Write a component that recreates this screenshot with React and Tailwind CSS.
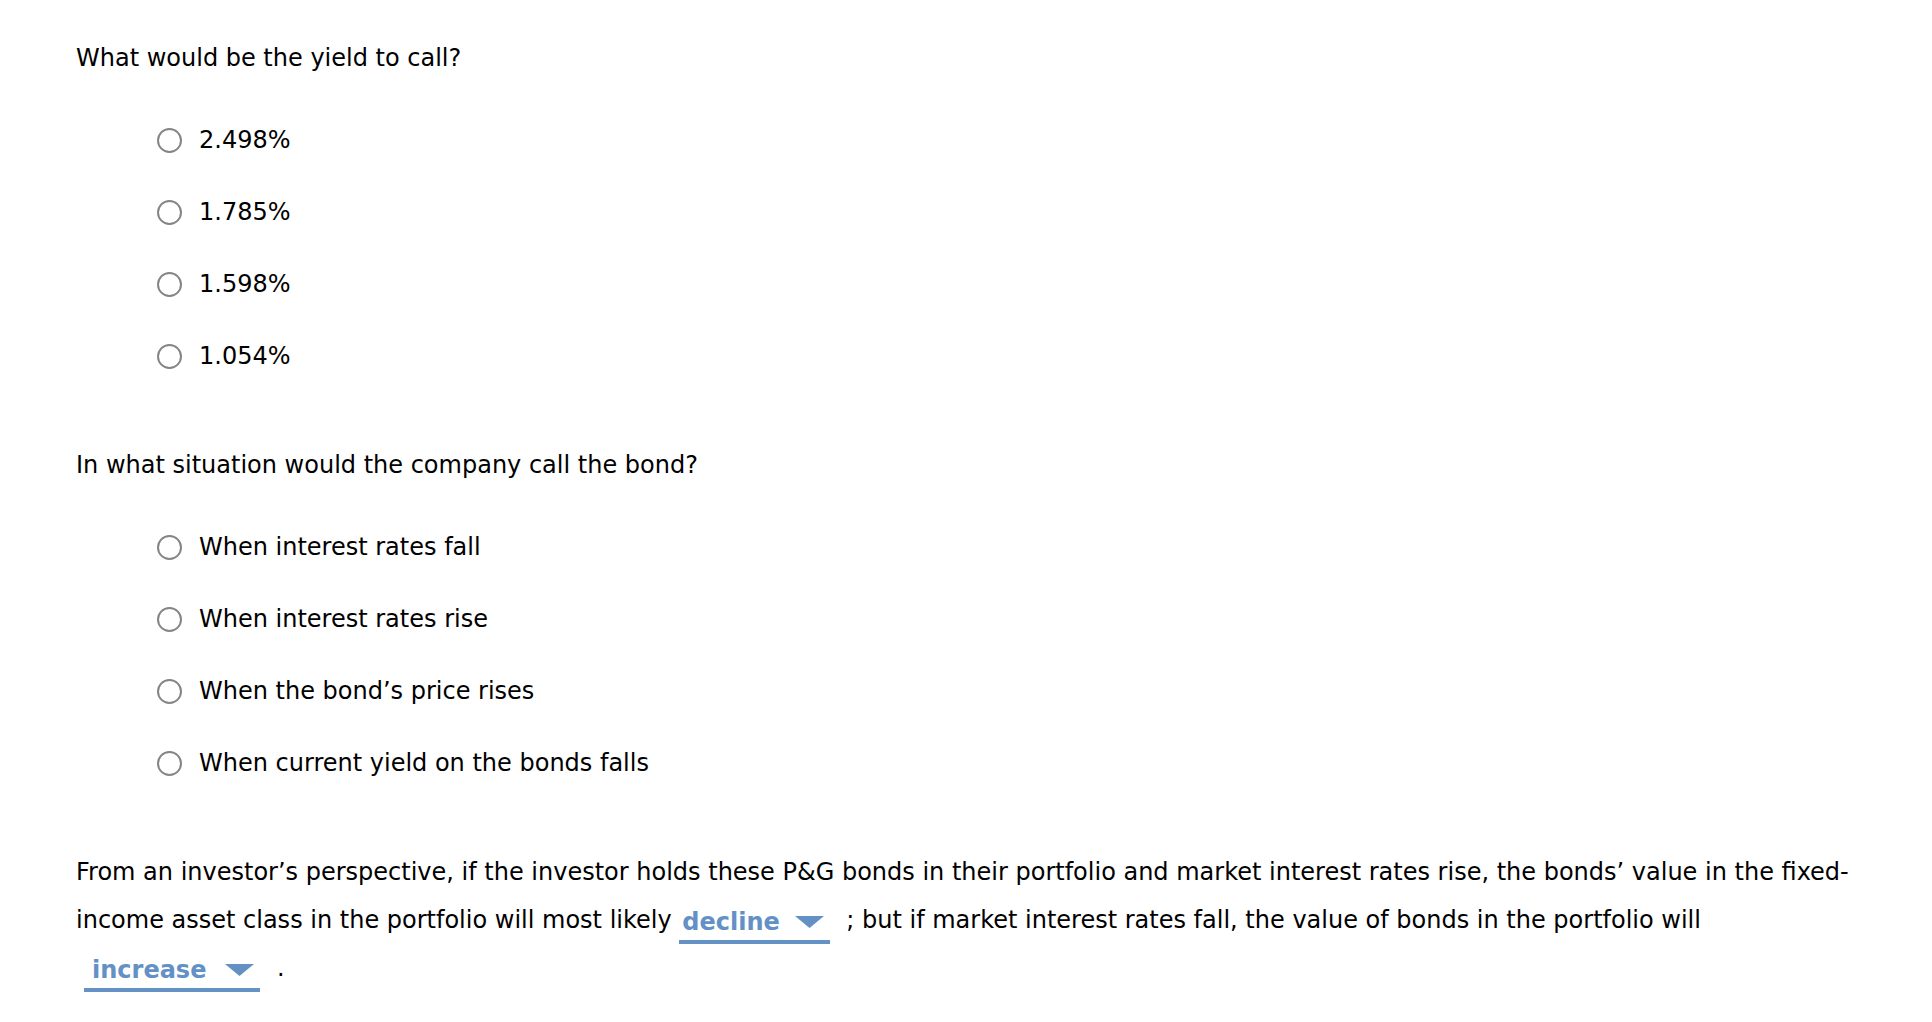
import { useState } from "react";

const font = { fontFamily: '"DejaVu Sans", Verdana, sans-serif' };

function Radio({ label, checked, onClick }) {
  return (
    <label className="flex items-center h-[72px] pl-[81px] cursor-pointer" onClick={onClick}>
      <span className="w-[25px] h-[25px] rounded-full border-2 border-[#858585] bg-white flex items-center justify-center shrink-0">
        {checked && <span className="w-[13px] h-[13px] rounded-full bg-[#333]" />}
      </span>
      <span className="ml-[17px]">{label}</span>
    </label>
  );
}

function Question({ title, options, className }) {
  const [picked, setPicked] = useState(null);
  return (
    <div className={className}>
      <div className="leading-[30px]">{title}</div>
      <div className="mt-[31px]">
        {options.map((o, i) => (
          <Radio key={o} label={o} checked={picked === i} onClick={() => setPicked(i)} />
        ))}
      </div>
    </div>
  );
}

function Dropdown({ value, className }) {
  return (
    <span
      className={`inline-flex items-center justify-between h-[40px] border-b-4 border-[#6592c4] align-bottom ${className}`}
    >
      <span className="font-bold text-[#6391c6]">{value}</span>
      <svg width="29" height="12" viewBox="0 0 29 12" className="mr-[6px]">
        <polygon points="0,0 29,0 14.5,12" fill="#6391c6" />
      </svg>
    </span>
  );
}

export default function App() {
  return (
    <div className="min-h-screen bg-white text-black text-[24px] pl-[76px] pt-[43px]" style={font}>
      <Question
        title="What would be the yield to call?"
        options={["2.498%", "1.785%", "1.598%", "1.054%"]}
      />
      <Question
        className="mt-[58px]"
        title="In what situation would the company call the bond?"
        options={[
          "When interest rates fall",
          "When interest rates rise",
          "When the bond’s price rises",
          "When current yield on the bonds falls",
        ]}
      />
      <p className="mt-[49px] leading-[48px]">
        From an investor’s perspective, if the investor holds these P&amp;G bonds in their portfolio and market interest rates rise, the bonds’ value in the fixed-
        <br />
        income asset class in the portfolio will most likely{" "}
        <Dropdown value="decline" className="w-[151px] pl-[3px] mr-[16px]" />
        ; but if market interest rates fall, the value of bonds in the portfolio will
        <br />
        <Dropdown value="increase" className="w-[176px] pl-[8px] ml-[8px] mr-[17px]" />.
      </p>
    </div>
  );
}
